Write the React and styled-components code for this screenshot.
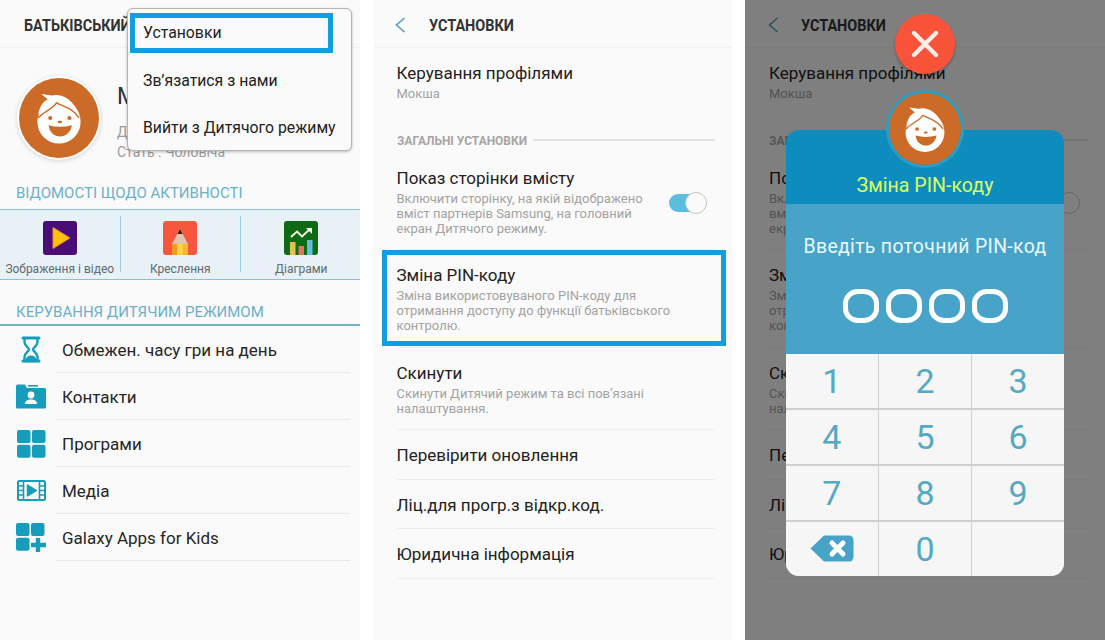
import styled, { createGlobalStyle } from 'styled-components';

const GlobalStyle = createGlobalStyle`
  html, body {
    margin: 0;
    padding: 0;
    background: #fff;
    font-family: Roboto, "Liberation Sans", sans-serif;
  }
  *, *::before, *::after { box-sizing: border-box; }
`;

const Page = styled.div`
  display: grid;
  grid-template-columns: 360px 358px 360px;
  column-gap: 13.5px;
  width: 1105px;
  height: 640px;
  overflow: hidden;
`;

const Panel = styled.section`
  position: relative;
  height: 640px;
  background: #fafafa;
  overflow: hidden;
`;

const Header = styled.header`
  display: flex;
  align-items: center;
  height: 48px;
  border-bottom: 1px solid #f0f0f0;
  padding-top: 3px;
  padding-left: ${p => p.$left || 24}px;
`;

const HeaderTitle = styled.h1`
  margin: 0;
  font-size: 16.5px;
  font-weight: 700;
  color: #333;
  white-space: nowrap;
  transform: scaleX(0.875);
  transform-origin: left center;
`;

const BackIcon = styled.svg`
  width: 12px;
  height: 18px;
  margin-right: 22.5px;
  flex: none;
`;

/* parent screen */
const Profile = styled.div`
  display: flex;
  align-items: flex-start;
  height: 125px;
  padding: 30px 0 0 19px;
`;

const AvatarRing = styled.div`
  flex: none;
  width: 80px;
  height: 80px;
  border-radius: 50%;
  box-shadow: 0 0 0 2px #fff, 0 1px 4px 2px rgba(0, 0, 0, 0.16);
  overflow: hidden;
`;

const ProfileInfo = styled.div`
  margin-left: 18px;
  padding-top: 4px;
`;

const ProfileName = styled.div`
  font-size: 23px;
  line-height: 30px;
  color: #333;
`;

const ProfileMeta = styled.div`
  font-size: 14px;
  line-height: 20px;
  color: #9b9b9b;
  margin-top: ${p => p.$top || 0}px;
`;

const SectionLabel = styled.h2`
  margin: 0;
  padding: 3px 0 0 16px;
  font-size: 15px;
  font-weight: 400;
  line-height: 34px;
  height: 36px;
  color: #6cb0c8;
`;

const ActivityStrip = styled.div`
  display: grid;
  grid-template-columns: repeat(3, 120.5px);
  height: 71px;
  margin-bottom: 14px;
  background: #e7f1f6;
  border-top: 1.5px solid #8dc0d3;
  border-bottom: 1.5px solid #8dc0d3;
  padding-top: 6px;
`;

const ActivityCell = styled.div`
  display: flex;
  flex-direction: column;
  align-items: center;
  height: 56px;
  padding-top: 5px;
  border-right: ${p => (p.$last ? 'none' : '1.5px solid #a5cbda')};
`;

const ActivityLabel = styled.span`
  font-size: 12px;
  line-height: 16px;
  margin-top: 6px;
  color: #5f6b70;
  white-space: nowrap;
`;

const ActivityIcon = styled.svg`
  width: 34px;
  height: 34px;
  flex: none;
`;

const ManageLabel = styled(SectionLabel)`
  height: 32px;
  line-height: 30px;
  padding-top: 3px;
  border-bottom: 2px solid #74b3ca;
`;

const ManageRow = styled.div`
  display: flex;
  align-items: center;
  height: 47px;
  padding-left: 16px;
`;

const ManageIconBox = styled.div`
  flex: none;
  width: 30px;
  height: 30px;
  margin-right: 16px;
  display: flex;
  align-items: center;
  justify-content: center;
`;

const ManageText = styled.div`
  flex: none;
  width: 294px;
  height: 47px;
  margin-left: -6px;
  padding-left: 6px;
  line-height: 48.5px;
  font-size: 17px;
  color: #262626;
  border-bottom: 1px solid #e9e9e9;
`;

/* popup menu */
const Menu = styled.div`
  position: absolute;
  left: 127px;
  top: 8px;
  width: 225px;
  height: 143px;
  padding-top: 1px;
  background: #fafafa;
  border: 1px solid #b5b5b5;
  border-radius: 6px;
  box-shadow: 0 1px 3px rgba(0, 0, 0, 0.25);
`;

const MenuItem = styled.div`
  position: relative;
  height: 47.5px;
  padding-left: 15px;
  line-height: 45px;
  font-size: 15.8px;
  color: #222;
  white-space: nowrap;
  &::after {
    content: ${p => (p.$marked ? "''" : 'none')};
    position: absolute;
    left: 2px;
    top: 3px;
    width: 203px;
    height: 40px;
    border: 5px solid #0ea0dc;
  }
`;

/* settings screen */
const SettingsBody = styled.div`
  padding: 0 17px 0 ${p => p.$left}px;
`;

const SettingRow = styled.div`
  position: relative;
  display: flex;
  align-items: center;
  justify-content: space-between;
  padding: 14px 0 ${p => p.$bottom ?? 13.5}px;
  border-bottom: ${p => (p.$plain ? 'none' : '1px solid #ededed')};
  &::after {
    content: ${p => (p.$marked ? "''" : 'none')};
    position: absolute;
    left: -15px;
    right: -11px;
    top: 0;
    bottom: 1px;
    border: 5px solid #0ea0dc;
  }
`;

const SettingTitle = styled.div`
  font-size: 17px;
  line-height: 22px;
  color: #222;
  white-space: nowrap;
`;

const SettingSub = styled.div`
  margin-top: 1.5px;
  font-size: 13px;
  line-height: 15px;
  color: #a3a3a3;
  white-space: nowrap;
`;

const GroupLabel = styled.div`
  display: flex;
  align-items: center;
  gap: 7px;
  height: 38.5px;
  padding-top: 12px;
  &::after {
    content: '';
    flex: 1;
    height: 1.5px;
    background: #e2e2e2;
  }
`;

const GroupText = styled.span`
  display: inline-block;
  width: 129px;
  font-weight: 700;
  font-size: 13.5px;
  color: #a5a5a5;
  white-space: nowrap;
  transform: scaleX(0.885);
  transform-origin: left center;
`;

const Toggle = styled.div`
  position: relative;
  flex: none;
  width: 38px;
  height: 22px;
  margin: 3px 8px 0 0;
  &::before {
    content: '';
    position: absolute;
    left: 0;
    top: 2px;
    width: 32px;
    height: 18px;
    border-radius: 9px;
    background: #5cbede;
  }
  &::after {
    content: '';
    position: absolute;
    right: 0;
    top: 0;
    width: 22px;
    height: 22px;
    border-radius: 50%;
    background: #fafafa;
    border: 1px solid #c4c4c4;
  }
`;

/* pin dialog */
const Dimmer = styled.div`
  position: absolute;
  inset: 0;
  background: rgba(0, 0, 0, 0.49);
`;

const CloseButton = styled.div`
  position: absolute;
  left: 150px;
  top: 14px;
  width: 60px;
  height: 60px;
  border-radius: 50%;
  background: #f9533a;
  box-shadow: 0 2px 3px rgba(0, 0, 0, 0.25);
  display: flex;
  align-items: center;
  justify-content: center;
`;

const Dialog = styled.div`
  position: absolute;
  left: 41px;
  top: 130px;
  width: 278px;
  height: 446px;
  border-radius: 13px;
  display: flex;
  flex-direction: column;
`;

const DialogAvatar = styled.div`
  position: absolute;
  left: 103px;
  top: -37px;
  width: 72px;
  height: 72px;
  border-radius: 50%;
  overflow: hidden;
  box-shadow: 0 0 0 3px #2f9cc2;
`;

const DialogHead = styled.div`
  flex: none;
  height: 74px;
  padding-top: 44px;
  background: #0d8dbe;
  border-radius: 13px 13px 0 0;
  text-align: center;
  font-size: 19.6px;
  line-height: 24px;
  color: #d9ff5e;
`;

const DialogPrompt = styled.div`
  flex: none;
  height: 150px;
  padding-top: 30px;
  background: #47a3c8;
  text-align: center;
  font-size: 19.4px;
  line-height: 26px;
  letter-spacing: 0.35px;
  color: #e9f8fb;
`;

const PinDots = styled.div`
  display: flex;
  justify-content: center;
  gap: 7px;
  margin-top: 29px;
`;

const PinDot = styled.div`
  width: 36px;
  height: 34px;
  border: 5px solid #fff;
  border-radius: 42%;
`;

const Keypad = styled.div`
  flex: 1;
  display: grid;
  grid-template-columns: 1fr 1fr 1fr;
  grid-template-rows: repeat(4, 1fr);
  gap: 1.5px;
  background: #cfcfcf;
  border-radius: 0 0 13px 13px;
  overflow: hidden;
`;

const Key = styled.div`
  display: flex;
  align-items: center;
  justify-content: center;
  background: #f6f6f6;
  font-size: 34px;
  color: #55a9c0;
`;

const FaceSvg = styled.svg`
  display: block;
  width: 100%;
  height: 100%;
`;

const KidFace = () => (
  <FaceSvg viewBox="0 0 100 100">
    <rect width="100" height="100" fill="#cc6b28" />
    <circle cx="50" cy="55" r="27" fill="#fff" />
    <path d="M24 45 C27 33 31 29 36 27 L28 20 L41 22 C50 19 66 23 76 46 C66 36 56 32 47 29 C42 37 32 40 24 45 Z" fill="#fff" />
    <path d="M24 50 C30 42 41 40 47 31 C56 36 68 38 75 50" fill="none" stroke="#cc6b28" strokeWidth="1.8" />
    <circle cx="39" cy="50" r="2.6" fill="#cc6b28" />
    <circle cx="63" cy="50" r="2.6" fill="#cc6b28" />
    <ellipse cx="51" cy="55" rx="2.8" ry="1.6" fill="#cc6b28" />
    <path d="M37 59 Q51 63 66 59 C65 68 58 73 51.5 73 C44 73 38 68 37 59 Z" fill="#cc6b28" />
  </FaceSvg>
);

const PlayTile = () => (
  <ActivityIcon viewBox="0 0 34 34">
    <rect width="34" height="34" rx="3" fill="#4a0d78" />
    <path d="M10 6.5 L27 17 L10 27.5 Z" fill="#ffc10a" stroke="#f08a24" strokeWidth="1" strokeLinejoin="round" />
  </ActivityIcon>
);

const PencilTile = () => (
  <ActivityIcon viewBox="0 0 34 34">
    <rect width="34" height="34" rx="3" fill="#f7573d" />
    <path d="M17 8 L9 23 V34 H25 V23 Z" fill="#ddc5b0" />
    <path d="M17 8 L14.5 13 H19.5 Z" fill="#2b1a14" />
    <rect x="9" y="23" width="5.3" height="11" fill="#f59a1d" />
    <rect x="14.3" y="23" width="5.4" height="11" fill="#ffd740" />
    <rect x="19.7" y="23" width="5.3" height="11" fill="#f9b92a" />
  </ActivityIcon>
);

const ChartTile = () => (
  <ActivityIcon viewBox="0 0 34 34">
    <rect width="34" height="34" rx="3" fill="#0f6a16" />
    <rect x="6" y="21" width="5.5" height="13" fill="#e5c04e" />
    <rect x="14.5" y="25" width="5.5" height="9" fill="#e2735f" />
    <rect x="23" y="19" width="5.5" height="15" fill="#60bfe0" />
    <path d="M7 16 L13 10.5 L18 15.5 L26 8" fill="none" stroke="#f3f7df" strokeWidth="1.8" />
    <path d="M22 7 H28 V13 Z" fill="#f3f7df" />
  </ActivityIcon>
);

const HourglassIcon = () => (
  <svg width="20" height="27" viewBox="0 0 20 27">
    <path d="M2 2 H18 M2 25 H18" stroke="#169dbb" strokeWidth="3" strokeLinecap="round" />
    <path d="M3.5 2 V6 C3.5 10 8 11.5 8 13.5 C8 15.5 3.5 17 3.5 21 V25 H16.5 V21 C16.5 17 12 15.5 12 13.5 C12 11.5 16.5 10 16.5 6 V2" fill="none" stroke="#169dbb" strokeWidth="2.4" />
    <path d="M4.5 24 C5 20.5 8 19.5 10 19.5 C12 19.5 15 20.5 15.5 24 Z" fill="#169dbb" />
  </svg>
);

const FolderIcon = () => (
  <svg width="30" height="25" viewBox="0 0 30 25">
    <path d="M1.5 0.5 H9 L11 4 H28.5 A1.5 1.5 0 0 1 30 5.5 V23 A1.5 1.5 0 0 1 28.5 24.5 H1.5 A1.5 1.5 0 0 1 0 23 V2 A1.5 1.5 0 0 1 1.5 0.5 Z" fill="#169dbb" />
    <rect x="12" y="1" width="10" height="1.6" fill="#169dbb" />
    <circle cx="15" cy="11" r="3.4" fill="#fff" />
    <path d="M9 20 C9 16.5 12 15.5 15 15.5 C18 15.5 21 16.5 21 20 Z" fill="#fff" />
  </svg>
);

const GridIcon = () => (
  <svg width="29" height="28" viewBox="0 0 29 28">
    <rect x="0" y="0" width="13.5" height="13" rx="2" fill="#169dbb" />
    <rect x="15" y="0" width="13.5" height="13" rx="2" fill="#169dbb" />
    <rect x="0" y="14.8" width="13.5" height="13" rx="2" fill="#169dbb" />
    <rect x="15" y="14.8" width="13.5" height="13" rx="2" fill="#169dbb" />
  </svg>
);

const FilmIcon = () => (
  <svg width="29" height="21" viewBox="0 0 29 21">
    <rect x="1" y="1" width="27" height="19" rx="1.5" fill="none" stroke="#169dbb" strokeWidth="2" />
    <path d="M6.5 1 V20 M22.5 1 V20" stroke="#169dbb" strokeWidth="1.6" />
    <path d="M1 6 H6 M1 10.5 H6 M1 15 H6 M23 6 H28 M23 10.5 H28 M23 15 H28" stroke="#169dbb" strokeWidth="1.4" />
    <path d="M10.5 5 L19.5 10.5 L10.5 16 Z" fill="#169dbb" stroke="#169dbb" strokeWidth="1.4" strokeLinejoin="round" />
  </svg>
);

const GridPlusIcon = () => (
  <svg width="30" height="29" viewBox="0 0 30 29">
    <rect x="0" y="0" width="13.5" height="13" rx="2" fill="#169dbb" />
    <rect x="15" y="0" width="13.5" height="13" rx="2" fill="#169dbb" />
    <rect x="0" y="14.8" width="13.5" height="13" rx="2" fill="#169dbb" />
    <path d="M22 15 V29 M15 22 H30" stroke="#169dbb" strokeWidth="4.4" />
  </svg>
);

const BackspaceIcon = () => (
  <svg width="44" height="27" viewBox="0 0 44 27">
    <path d="M14 0.5 H39 A4.5 4.5 0 0 1 43.5 5 V22 A4.5 4.5 0 0 1 39 26.5 H14 L0.5 13.5 Z" fill="#47a3c8" />
    <path d="M22 8 L33 19 M33 8 L22 19" stroke="#fff" strokeWidth="5" strokeLinecap="round" />
  </svg>
);

const BackChevron = () => (
  <BackIcon viewBox="0 0 12 18">
    <path d="M10.5 2 L2.5 9 L10.5 16" fill="none" stroke="#5b9db5" strokeWidth="1.6" />
  </BackIcon>
);

const manageRows = [
  { label: 'Обмежен. часу гри на день', icon: <HourglassIcon /> },
  { label: 'Контакти', icon: <FolderIcon /> },
  { label: 'Програми', icon: <GridIcon /> },
  { label: 'Медіа', icon: <FilmIcon /> },
  { label: 'Galaxy Apps for Kids', icon: <GridPlusIcon /> },
];

const ParentScreen = () => (
  <Panel>
    <Header>
      <HeaderTitle>БАТЬКІВСЬКИЙ КОНТРОЛЬ</HeaderTitle>
    </Header>
    <Profile>
      <AvatarRing>
        <KidFace />
      </AvatarRing>
      <ProfileInfo>
        <ProfileName>Мокша</ProfileName>
        <ProfileMeta $top={10}>Дата народження</ProfileMeta>
        <ProfileMeta>Стать : Чоловіча</ProfileMeta>
      </ProfileInfo>
    </Profile>
    <SectionLabel>ВІДОМОСТІ ЩОДО АКТИВНОСТІ</SectionLabel>
    <ActivityStrip>
      <ActivityCell>
        <PlayTile />
        <ActivityLabel>Зображення і відео</ActivityLabel>
      </ActivityCell>
      <ActivityCell>
        <PencilTile />
        <ActivityLabel>Креслення</ActivityLabel>
      </ActivityCell>
      <ActivityCell $last>
        <ChartTile />
        <ActivityLabel>Діаграми</ActivityLabel>
      </ActivityCell>
    </ActivityStrip>
    <ManageLabel>КЕРУВАННЯ ДИТЯЧИМ РЕЖИМОМ</ManageLabel>
    {manageRows.map(row => (
      <ManageRow key={row.label}>
        <ManageIconBox>{row.icon}</ManageIconBox>
        <ManageText>{row.label}</ManageText>
      </ManageRow>
    ))}
    <Menu>
      <MenuItem $marked>Установки</MenuItem>
      <MenuItem>Зв’язатися з нами</MenuItem>
      <MenuItem>Вийти з Дитячого режиму</MenuItem>
    </Menu>
  </Panel>
);

const SettingsContent = ({ marked, headerLeft, bodyLeft }) => (
  <>
    <Header $left={headerLeft}>
      <BackChevron />
      <HeaderTitle>УСТАНОВКИ</HeaderTitle>
    </Header>
    <SettingsBody $left={bodyLeft}>
      <SettingRow $plain $bottom={14}>
        <div>
          <SettingTitle>Керування профілями</SettingTitle>
          <SettingSub>Мокша</SettingSub>
        </div>
      </SettingRow>
      <GroupLabel>
        <GroupText>ЗАГАЛЬНІ УСТАНОВКИ</GroupText>
      </GroupLabel>
      <SettingRow>
        <div>
          <SettingTitle>Показ сторінки вмісту</SettingTitle>
          <SettingSub>
            Включити сторінку, на якій відображено
            <br />
            вміст партнерів Samsung, на головний
            <br />
            екран Дитячого режиму.
          </SettingSub>
        </div>
        <Toggle />
      </SettingRow>
      <SettingRow $marked={marked} $bottom={14.5}>
        <div>
          <SettingTitle>Зміна PIN-коду</SettingTitle>
          <SettingSub>
            Зміна використовуваного PIN-коду для
            <br />
            отримання доступу до функції батьківського
            <br />
            контролю.
          </SettingSub>
        </div>
      </SettingRow>
      <SettingRow>
        <div>
          <SettingTitle>Скинути</SettingTitle>
          <SettingSub>
            Скинути Дитячий режим та всі пов’язані
            <br />
            налаштування.
          </SettingSub>
        </div>
      </SettingRow>
      <SettingRow $bottom={12.5}>
        <SettingTitle>Перевірити оновлення</SettingTitle>
      </SettingRow>
      <SettingRow $bottom={12.5}>
        <SettingTitle>Ліц.для прогр.з відкр.код.</SettingTitle>
      </SettingRow>
      <SettingRow $bottom={12.5}>
        <SettingTitle>Юридична інформація</SettingTitle>
      </SettingRow>
    </SettingsBody>
  </>
);

const keys = ['1', '2', '3', '4', '5', '6', '7', '8', '9'];

const PinDialog = () => (
  <>
    <Dimmer />
    <CloseButton>
      <svg width="30" height="30" viewBox="0 0 30 30">
        <path d="M4 4 L26 26 M26 4 L4 26" stroke="#fdeee8" strokeWidth="4.4" strokeLinecap="round" />
      </svg>
    </CloseButton>
    <Dialog>
      <DialogHead>Зміна PIN-коду</DialogHead>
      <DialogPrompt>
        Введіть поточний PIN-код
        <PinDots>
          <PinDot />
          <PinDot />
          <PinDot />
          <PinDot />
        </PinDots>
      </DialogPrompt>
      <Keypad>
        {keys.map(k => (
          <Key key={k}>{k}</Key>
        ))}
        <Key>
          <BackspaceIcon />
        </Key>
        <Key>0</Key>
        <Key />
      </Keypad>
      <DialogAvatar>
        <KidFace />
      </DialogAvatar>
    </Dialog>
  </>
);

const App = () => (
  <Page>
    <GlobalStyle />
    <ParentScreen />
    <Panel>
      <SettingsContent marked headerLeft={20.5} bodyLeft={23} />
    </Panel>
    <Panel>
      <SettingsContent headerLeft={21.5} bodyLeft={24} />
      <PinDialog />
    </Panel>
  </Page>
);

export default App;
